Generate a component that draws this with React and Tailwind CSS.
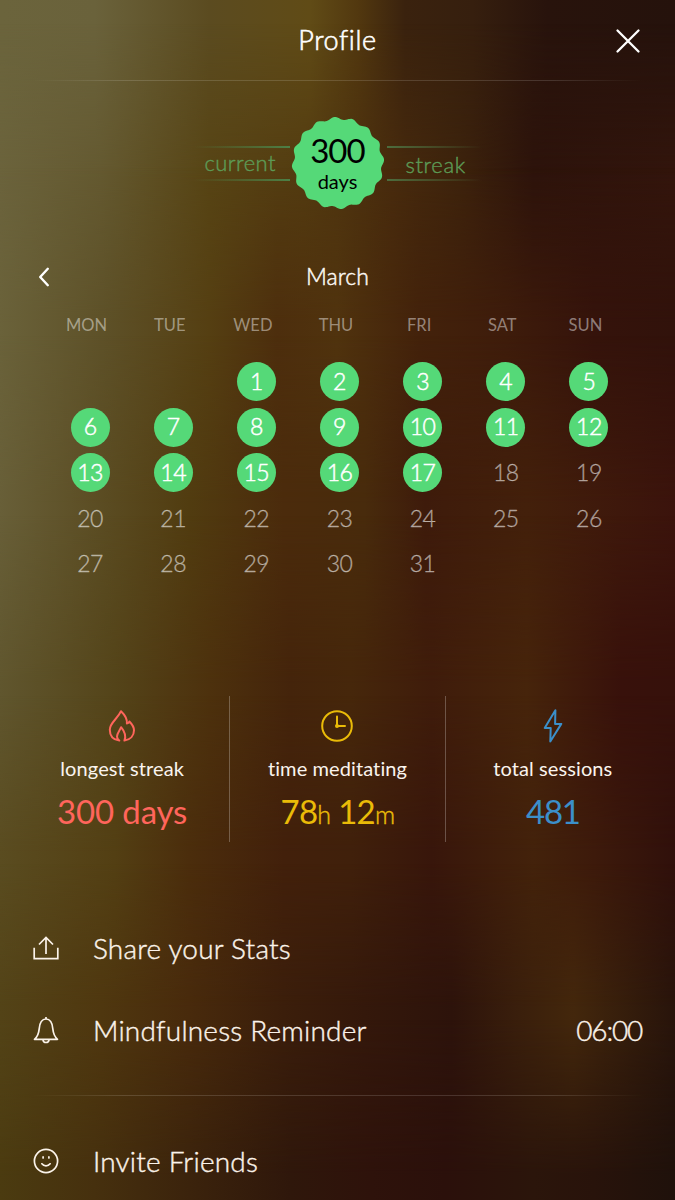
import React from 'react';

const weekdays = ['MON', 'TUE', 'WED', 'THU', 'FRI', 'SAT', 'SUN'];
const days = Array.from({ length: 31 }, (_, i) => i + 1);
const LAST_COMPLETED_DAY = 17;

// Each layer is one horizontal strip of colour that fades into the next one
const Backdrop = () => (
  <div className="absolute inset-0 overflow-hidden">
    <div className="absolute inset-0 bg-[linear-gradient(90deg,#6b643c_0%,#6a623b_14%,#5b4b20_31%,#604b16_46%,#52380f_53%,#3a220e_60%,#361f0e_70%,#28130c_81%,#25120c_100%)]" />
    <div className="absolute inset-0 bg-[linear-gradient(90deg,#6b633c_0%,#645930_15%,#574414_31%,#533b10_45%,#482b0d_58%,#3d230c_68%,#2d130b_79%,#33150c_100%)] [mask-image:linear-gradient(180deg,transparent_2%,black_15%)]" />
    <div className="absolute inset-0 bg-[linear-gradient(90deg,#6a623a_0%,#5d5027_16%,#553f12_31%,#4d2e0d_41%,#50330e_50%,#43220b_62%,#3e1c0b_75%,#35130b_88%,#31120b_100%)] [mask-image:linear-gradient(180deg,transparent_14%,black_27%)]" />
    <div className="absolute inset-0 bg-[linear-gradient(90deg,#685f38_0%,#5a4b21_16%,#513c10_28%,#4b2b0c_42%,#482b0c_54%,#3e1b0b_63%,#43200b_78%,#3b130c_100%)] [mask-image:linear-gradient(180deg,transparent_28%,black_42%)]" />
    <div className="absolute inset-0 bg-[linear-gradient(90deg,#60562e_0%,#544419_17%,#4d310d_31%,#44240b_43%,#46270b_52%,#3f1c0b_64%,#46240b_78%,#38110b_92%,#36110b_100%)] [mask-image:linear-gradient(180deg,transparent_43%,black_57%)]" />
    <div className="absolute inset-0 bg-[linear-gradient(90deg,#5a4c20_0%,#533f13_17%,#4b2d0c_28%,#42200b_42%,#40200b_52%,#38160b_64%,#43220b_79%,#3d1a0b_88%,#30100b_100%)] [mask-image:linear-gradient(180deg,transparent_58%,black_71%)]" />
    <div className="absolute inset-0 bg-[linear-gradient(90deg,#534317_0%,#4f370f_15%,#482a0c_28%,#3b1e0b_42%,#34180b_54%,#2d130b_67%,#3a1f0c_77%,#43270c_85%,#28140b_100%)] [mask-image:linear-gradient(180deg,transparent_72%,black_84%)]" />
    <div className="absolute inset-0 bg-[linear-gradient(90deg,#4b3b10_0%,#46300e_14%,#3b230c_28%,#2f170b_43%,#2e120b_55%,#2b100b_66%,#2b150b_79%,#28130b_88%,#1f110b_100%)] [mask-image:linear-gradient(180deg,transparent_85%,black_98%)]" />
  </div>
);

// Wavy-edged disc traced in polar coordinates
const sealPath = Array.from({ length: 240 }, (_, i) => {
  const angle = (i / 240) * Math.PI * 2;
  const radius = 44.8 + 1.4 * Math.cos(16 * angle + 1.2);
  const x = (47 + radius * Math.cos(angle)).toFixed(2);
  const y = (47 + radius * Math.sin(angle)).toFixed(2);
  return `${i === 0 ? 'M' : 'L'}${x} ${y}`;
}).join('') + 'Z';

const StreakBadge = () => (
  <div className="flex h-[94px] mt-[35px] items-center justify-center">
    <div className="w-[96px] h-[35px] flex flex-col justify-between">
      <div className="h-0.5 bg-linear-to-r from-transparent to-[#4c8046]" />
      <span className="pl-[11px] text-[22px] leading-6 tracking-[0.45px] font-light text-[#5d9b56] mt-[-1px] [-webkit-text-stroke:0.4px]">current</span>
      <div className="h-0.5 bg-linear-to-r from-transparent to-[#4c8046]" />
    </div>
    <div className="relative w-[94px] h-[94px] mx-[1px]">
      <svg className="absolute inset-0" width="94" height="94" viewBox="0 0 94 94">
        <path d={sealPath} fill="#55d978" />
      </svg>
      <div className="relative flex flex-col items-center text-black">
        <span className="mt-[15px] text-[33px] leading-[38px] tracking-[-0.9px]">300</span>
        <span className="text-[20px] leading-6">days</span>
      </div>
    </div>
    <div className="w-[96px] h-[35px] flex flex-col justify-between">
      <div className="h-0.5 ml-px bg-linear-to-l from-transparent to-[#4c6d3e]" />
      <span className="pl-[20px] text-[22px] leading-6 tracking-[0.6px] font-light text-[#5d9b56] mt-[4px] [-webkit-text-stroke:0.4px]">streak</span>
      <div className="h-0.5 ml-px bg-linear-to-l from-transparent to-[#4c6d3e]" />
    </div>
  </div>
);

const Calendar = () => (
  <div>
    <div className="relative flex items-center justify-center h-8 mt-[50px]">
      <button className="absolute left-[37px] top-[7px]">
        <svg width="14" height="20" viewBox="0 0 14 20" fill="none" stroke="#fff" strokeWidth="2.4" strokeLinecap="round" strokeLinejoin="round">
          <path d="M10.8 1.8 3.2 10l7.6 8.2" />
        </svg>
      </button>
      <h2 className="text-[23px] tracking-[0.1px] font-light text-[#fbf7f2] [-webkit-text-stroke:0.5px]">March</h2>
    </div>
    <div className="grid grid-cols-7 ml-[45px] w-[582px] mt-[21px] h-6">
      {weekdays.map((day) => (
        <span key={day} className="text-center text-[16.5px] leading-6 text-white/45">{day}</span>
      ))}
    </div>
    <div className="grid grid-cols-7 ml-[48.5px] w-[582px] mt-[21.5px] auto-rows-[45.7px]">
      {days.map((day) => (
        <div key={day} className="flex items-center justify-center first:col-start-3">
          <span
            className={
              day <= LAST_COMPLETED_DAY
                ? 'flex items-center justify-center w-[39px] h-[39px] pb-px rounded-full bg-[#55d978] text-[23px] tracking-[-0.5px] font-light text-white [-webkit-text-stroke:0.5px]'
                : 'pb-px text-[23px] tracking-[-0.5px] font-light text-white/50 [-webkit-text-stroke:0.3px]'
            }
          >
            {day}
          </span>
        </div>
      ))}
    </div>
  </div>
);

const FlameIcon = () => (
  <svg width="32" height="36" viewBox="0 0 32 36" fill="none" stroke="#ff655c" strokeWidth="2" strokeLinejoin="round" strokeLinecap="round">
    <path d="M13.3 32.6C7.1 31.8 3.8 27.6 3.8 21.8c0-7.3 7.800-10.7 11.200-18.600 4.200 4 6.400 7.200 5.900 12.300 1.500-.2 2.200-.9 2.500-2 3.200 3.200 4.600 6 4.600 8.800 0 5.400-3.600 9.400-9.600 10.300 2.300-5-.2-9.600-3.300-13.400-1.200 3.300-4.100 5.800-4.100 9.400 0 1.600.8 3 2.300 4Z" />
  </svg>
);

const ClockIcon = () => (
  <svg width="34" height="34" viewBox="0 0 34 34" fill="none" stroke="#eabb08" strokeWidth="2" strokeLinecap="round">
    <circle cx="17" cy="17" r="14.8" />
    <path d="M17 7.5V17h8" />
    <circle cx="17" cy="17" r="2" fill="#eabb08" stroke="none" />
  </svg>
);

const BoltIcon = () => (
  <svg width="24" height="36" viewBox="0 0 24 36" fill="none" stroke="#3b8fca" strokeWidth="2" strokeLinejoin="round">
    <path d="M14.4 2.2 3.7 20h6l-.4 13.5L20.3 15.9h-6.2Z" />
  </svg>
);

const Stat = ({ icon, label, children }) => (
  <div className="flex flex-1 flex-col items-center">
    <div className="flex items-center h-9 mt-3">{icon}</div>
    <span className="mt-[12px] text-[20px] leading-6 tracking-[0.1px] text-[#faf4ee]">{label}</span>
    <span className="mt-[11px] text-[33px] leading-10">{children}</span>
  </div>
);

const Stats = () => (
  <div className="flex mx-[15px] mt-[109.5px] h-[146px] divide-x-[1.5px] divide-white/25">
    <Stat icon={<FlameIcon />} label="longest streak">
      <span className="tracking-[-0.15px] text-[#ff655c]">300 days</span>
    </Stat>
    <Stat icon={<ClockIcon />} label="time meditating">
      <span className="tracking-[-0.7px] text-[#eabb08]">
        78<span className="text-[25px] font-light [-webkit-text-stroke:0.4px]">h</span> 12<span className="text-[25px] font-light [-webkit-text-stroke:0.4px]">m</span>
      </span>
    </Stat>
    <Stat icon={<BoltIcon />} label="total sessions">
      <span className="tracking-[-1.3px] text-[#3b8fca]">481</span>
    </Stat>
  </div>
);

const ShareIcon = () => (
  <svg width="26" height="26" viewBox="0 0 26 26" fill="none" stroke="currentColor" strokeWidth="1.7">
    <path d="M1.2 12.8v10.8h23.6V12.8M13 19V2.8M6 9.5l7-7 7 7" />
  </svg>
);

const BellIcon = () => (
  <svg width="26" height="28" viewBox="0 0 26 28" fill="none" stroke="currentColor" strokeWidth="1.7" strokeLinejoin="round">
    <path d="M1.5 23.3c2.8-2.4 4.2-5.3 4.7-10.5C6.7 6.5 8.6 3 13 3s6.3 3.5 6.8 9.8c.5 5.2 1.9 8.1 4.7 10.5Z" />
    <path d="M13 3V1M10 23.8c.2 1.7 1.4 2.7 3 2.7s2.8-1 3-2.7" />
  </svg>
);

const SmileIcon = () => (
  <svg width="26" height="26" viewBox="0 0 26 26" fill="none" stroke="currentColor" strokeWidth="1.7" strokeLinecap="round">
    <circle cx="13" cy="13" r="11.6" />
    <path d="M10.1 8.9v1M15.9 8.9v1M8.9 15.8c2 2.8 6.2 2.8 8.2 0" />
  </svg>
);

const MenuRow = ({ icon, label, value }) => (
  <button className="flex w-full h-[82px] items-center px-[33px] text-[28px] font-light text-[#fbf3ea]">
    {icon}
    <span className="ml-[34px] pb-px tracking-[0.2px] [-webkit-text-stroke:0.4px]">{label}</span>
    {value && <span className="ml-auto pb-px tracking-[-1.2px] [-webkit-text-stroke:0.4px]">{value}</span>}
  </button>
);

const Divider = () => (
  <div className="h-px mx-8 bg-[linear-gradient(90deg,transparent,rgba(255,255,255,0.14)_15%,rgba(255,255,255,0.14)_85%,transparent)]" />
);

const App = () => {
  return (
    <div className="relative w-full h-[1200px] overflow-hidden bg-[#3b1d0b] font-['Lato','Liberation_Sans',sans-serif]">
      <Backdrop />
      <main className="relative">
        <header className="relative flex items-center justify-center h-20">
          <h1 className="text-[27px] tracking-[0.6px] font-light text-white [-webkit-text-stroke:0.6px]">Profile</h1>
          <button className="absolute right-[34px] top-[28px]">
            <svg width="26" height="26" viewBox="0 0 26 26" stroke="#fff" strokeWidth="2.3" strokeLinecap="round">
              <path d="M2.5 2.5l21 21M23.5 2.5l-21 21" />
            </svg>
          </button>
        </header>
        <Divider />
        <StreakBadge />
        <Calendar />
        <Stats />
        <div className="mt-[65px]">
          <MenuRow icon={<ShareIcon />} label="Share your Stats" />
          <MenuRow icon={<BellIcon />} label="Mindfulness Reminder" value="06:00" />
        </div>
        <div className="mt-[24px]">
          <Divider />
        </div>
        <div className="mt-[24px]">
          <MenuRow icon={<SmileIcon />} label="Invite Friends" />
        </div>
      </main>
    </div>
  );
};

export default App;
